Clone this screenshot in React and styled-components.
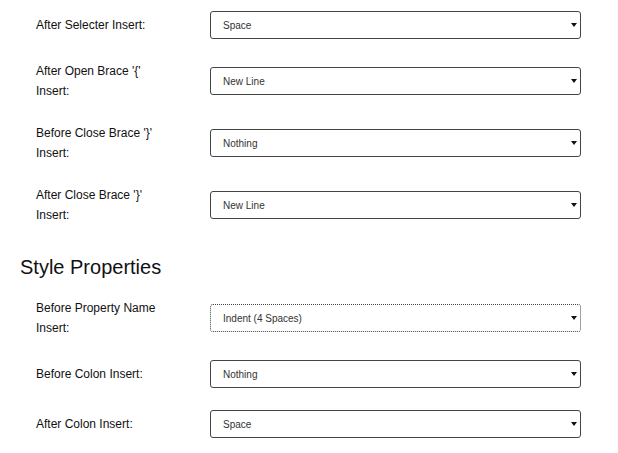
import React from "react";
import styled, { createGlobalStyle } from "styled-components";

const GlobalStyle = createGlobalStyle`
  html, body {
    margin: 0;
    padding: 0;
    background: #ffffff;
  }
  body {
    font-family: "Liberation Sans", Arial, sans-serif;
    color: #111;
  }
`;

const Page = styled.div`
  width: 618px;
  box-sizing: border-box;
  padding: 0 37px 0 20px;
`;

const Section = styled.section`
  display: flex;
  flex-direction: column;
`;

const Heading = styled.h2`
  margin: 19px 0 8px;
  font-size: 20px;
  line-height: 24px;
  font-weight: normal;
  color: #111;
`;

const Row = styled.div`
  display: grid;
  grid-template-columns: 174px 1fr;
  align-items: center;
  padding: 11px 0 11px 16px;
`;

const Label = styled.label`
  max-width: 130px;
  font-size: 12px;
  line-height: 20px;
  color: #111;
`;

const SelectWrap = styled.div`
  position: relative;
  height: 28px;

  &::after {
    content: "";
    position: absolute;
    right: 4px;
    top: 12px;
    border-left: 3px solid transparent;
    border-right: 3px solid transparent;
    border-top: 4px solid #111;
    pointer-events: none;
  }
`;

const Select = styled.select`
  appearance: none;
  -webkit-appearance: none;
  width: 100%;
  height: 28px;
  box-sizing: border-box;
  padding: 0 16px 0 12px;
  border: 1px ${({ $focused }) => ($focused ? "dotted" : "solid")} #444;
  border-radius: 3px;
  background: #fff;
  font-family: "Liberation Sans", Arial, sans-serif;
  font-size: 10px;
  color: #333;
  outline: none;
`;

const selectorRows = [
  { label: "After Selecter Insert:", value: "Space" },
  { label: "After Open Brace '{' Insert:", value: "New Line" },
  { label: "Before Close Brace '}' Insert:", value: "Nothing" },
  { label: "After Close Brace '}' Insert:", value: "New Line" },
];

const propertyRows = [
  { label: "Before Property Name Insert:", value: "Indent (4 Spaces)", focused: true },
  { label: "Before Colon Insert:", value: "Nothing" },
  { label: "After Colon Insert:", value: "Space" },
];

const options = ["Nothing", "Space", "New Line", "Indent (4 Spaces)"];

const OptionRow = ({ label, value, focused }) => (
  <Row>
    <Label>{label}</Label>
    <SelectWrap>
      <Select defaultValue={value} $focused={focused}>
        {options.map((o) => (
          <option key={o} value={o}>
            {o}
          </option>
        ))}
      </Select>
    </SelectWrap>
  </Row>
);

export default function App() {
  return (
    <Page>
      <GlobalStyle />
      <Section>
        {selectorRows.map((r) => (
          <OptionRow key={r.label} {...r} />
        ))}
      </Section>
      <Heading>Style Properties</Heading>
      <Section>
        {propertyRows.map((r) => (
          <OptionRow key={r.label} {...r} />
        ))}
      </Section>
    </Page>
  );
}
